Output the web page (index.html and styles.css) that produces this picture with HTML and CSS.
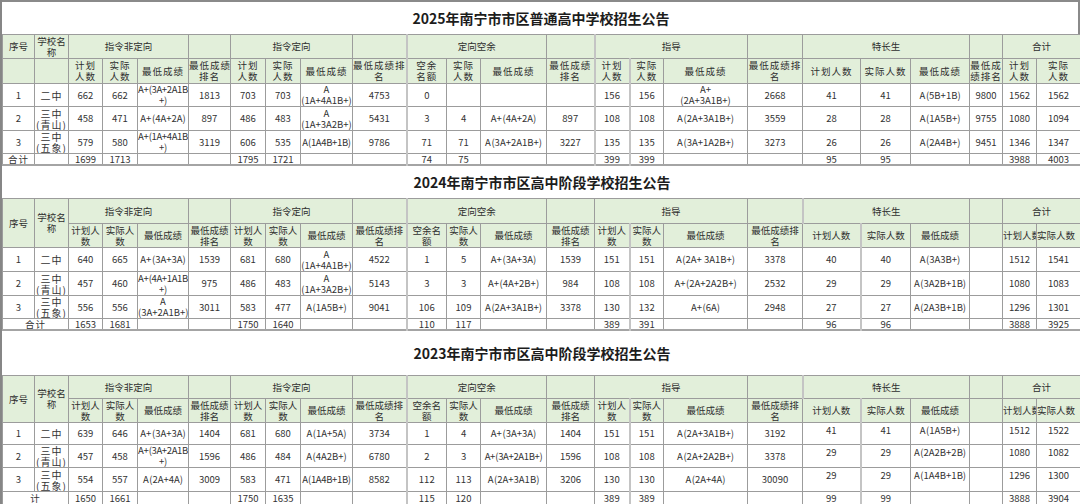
FILE: index.html
```html
<!DOCTYPE html>
<html lang="zh-CN">
<head>
<meta charset="utf-8">
<title>南宁市市区高中学校招生公告</title>
<link rel="stylesheet" href="styles.css">
</head>
<body>
<div class="page">

<section class="block b2025">
  <div class="block-title">2025年南宁市市区普通高中学校招生公告</div>
  <table class="grid">
    <colgroup><col><col><col><col><col><col><col><col><col><col><col><col><col><col><col><col><col><col><col><col><col><col><col><col></colgroup>
    <tr class="hd h1">
      <td>序号</td><td>学校名<br>称</td><td colspan="3">指令非定向</td><td></td><td colspan="3">指令定向</td><td></td><td colspan="3" class="thick-l">定向空余</td><td></td><td colspan="3" class="thick-l">指导</td><td></td><td colspan="3">特长生</td><td></td><td colspan="2">合计</td>
    </tr>
    <tr class="hd h2 sp">
      <td></td><td></td><td>计划<br>人数</td><td>实际<br>人数</td><td>最低成绩</td><td>最低成绩<br>排名</td><td>计划<br>人数</td><td>实际<br>人数</td><td>最低成绩</td><td>最低成绩排<br>名</td><td class="thick-l">空余<br>名额</td><td>实际<br>人数</td><td>最低成绩</td><td>最低成绩<br>排名</td><td class="thick-l">计划<br>人数</td><td class="thick-l">实际<br>人数</td><td>最低成绩</td><td>最低成绩排<br>名</td><td>计划人数</td><td>实际人数</td><td>最低成绩</td><td>最低成<br>绩排名</td><td>计划<br>人数</td><td>实际<br>人数</td>
    </tr>
    <tr class="d r1">
      <td>1</td><td class="cn">二中</td><td>662</td><td>662</td><td class="tight">A+&#8202;(3A+2A1B<br>+)</td><td>1813</td><td>703</td><td>703</td><td>A<br>(1A+4A1B+)</td><td>4753</td><td class="thick-l">0</td><td></td><td></td><td></td><td class="thick-l">156</td><td class="thick-l">156</td><td>A+<br>(2A+3A1B+)</td><td>2668</td><td>41</td><td>41</td><td>A&#8202;(5B+1B)</td><td>9800</td><td>1562</td><td>1562</td>
    </tr>
    <tr class="d r2">
      <td>2</td><td class="cn">三中<br>(青山)</td><td>458</td><td>471</td><td>A+&#8202;(4A+2A)</td><td>897</td><td>486</td><td>483</td><td>A<br>(1A+3A2B+)</td><td>5431</td><td class="thick-l">3</td><td>4</td><td>A+&#8202;(4A+2A)</td><td>897</td><td class="thick-l">108</td><td class="thick-l">108</td><td>A&#8202;(2A+3A1B+)</td><td>3559</td><td>28</td><td>28</td><td>A&#8202;(1A5B+)</td><td>9755</td><td>1080</td><td>1094</td>
    </tr>
    <tr class="d r3">
      <td>3</td><td class="cn">三中<br>(五象)</td><td>579</td><td>580</td><td class="tight">A+&#8202;(1A+4A1B<br>+)</td><td>3119</td><td>606</td><td>535</td><td class="tight">A&#8202;(1A4B+1B)</td><td>9786</td><td class="thick-l">71</td><td>71</td><td>A&#8202;(3A+2A1B+)</td><td>3227</td><td class="thick-l">135</td><td class="thick-l">135</td><td>A&#8202;(3A+1A2B+)</td><td>3273</td><td>26</td><td>26</td><td>A&#8202;(2A4B+)</td><td>9451</td><td>1346</td><td>1347</td>
    </tr>
    <tr class="t">
      <td class="cn">合计</td><td></td><td>1699</td><td>1713</td><td></td><td></td><td>1795</td><td>1721</td><td></td><td></td><td class="thick-l">74</td><td>75</td><td></td><td></td><td class="thick-l">399</td><td class="thick-l">399</td><td></td><td></td><td>95</td><td>95</td><td></td><td></td><td>3988</td><td>4003</td>
    </tr>
  </table>
</section>

<section class="block b2024">
  <div class="block-title">2024年南宁市市区高中阶段学校招生公告</div>
  <table class="grid">
    <colgroup><col><col><col><col><col><col><col><col><col><col><col><col><col><col><col><col><col><col><col><col><col><col><col><col></colgroup>
    <tr class="hd h1">
      <td rowspan="2">序号</td><td rowspan="2">学校名<br>称</td><td colspan="3">指令非定向</td><td></td><td colspan="3">指令定向</td><td></td><td colspan="3" class="thick-l">定向空余</td><td></td><td colspan="3">指导</td><td></td><td colspan="3" class="thick-l">特长生</td><td></td><td colspan="2">合计</td>
    </tr>
    <tr class="hd h2">
      <td>计划人<br>数</td><td>实际人<br>数</td><td>最低成绩</td><td>最低成绩<br>排名</td><td>计划人<br>数</td><td>实际人<br>数</td><td>最低成绩</td><td>最低成绩排<br>名</td><td class="thick-l">空余名<br>额</td><td>实际人<br>数</td><td>最低成绩</td><td>最低成绩<br>排名</td><td>计划人<br>数</td><td class="thick-l">实际人<br>数</td><td>最低成绩</td><td>最低成绩排<br>名</td><td>计划人数</td><td class="thick-l">实际人数</td><td>最低成绩</td><td></td><td class="spill">计划人数</td><td class="spill">实际人数</td>
    </tr>
    <tr class="d r1">
      <td>1</td><td class="cn">二中</td><td>640</td><td>665</td><td>A+&#8202;(3A+3A)</td><td>1539</td><td>681</td><td>680</td><td>A<br>(1A+4A1B+)</td><td>4522</td><td class="thick-l">1</td><td>5</td><td>A+&#8202;(3A+3A)</td><td>1539</td><td>151</td><td class="thick-l">151</td><td>A&#8202;(2A+ 3A1B+)</td><td>3378</td><td>40</td><td class="thick-l">40</td><td>A&#8202;(3A3B+)</td><td></td><td>1512</td><td>1541</td>
    </tr>
    <tr class="d r2">
      <td>2</td><td class="cn">三中<br>(青山)</td><td>457</td><td>460</td><td class="tight">A+&#8202;(4A+1A1B<br>+)</td><td>975</td><td>486</td><td>483</td><td>A<br>(1A+3A2B+)</td><td>5143</td><td class="thick-l">3</td><td>3</td><td>A+&#8202;(4A+2B+)</td><td>984</td><td>108</td><td class="thick-l">108</td><td>A+&#8202;(2A+2A2B+)</td><td>2532</td><td>29</td><td class="thick-l">29</td><td>A&#8202;(3A2B+1B)</td><td></td><td>1080</td><td>1083</td>
    </tr>
    <tr class="d r3">
      <td>3</td><td class="cn">三中<br>(五象)</td><td>556</td><td>556</td><td>A<br>(3A+2A1B+)</td><td>3011</td><td>583</td><td>477</td><td>A&#8202;(1A5B+)</td><td>9041</td><td class="thick-l">106</td><td>109</td><td>A&#8202;(2A+3A1B+)</td><td>3378</td><td>130</td><td class="thick-l">132</td><td>A+&#8202;(6A)</td><td>2948</td><td>27</td><td class="thick-l">27</td><td>A&#8202;(2A3B+1B)</td><td></td><td>1296</td><td>1301</td>
    </tr>
    <tr class="t">
      <td colspan="2" class="cn">合计</td><td>1653</td><td>1681</td><td></td><td></td><td>1750</td><td>1640</td><td></td><td></td><td class="thick-l">110</td><td>117</td><td></td><td></td><td>389</td><td class="thick-l">391</td><td></td><td></td><td>96</td><td class="thick-l">96</td><td></td><td></td><td>3888</td><td>3925</td>
    </tr>
  </table>
</section>

<section class="block b2023">
  <div class="block-title">2023年南宁市市区高中阶段学校招生公告</div>
  <table class="grid">
    <colgroup><col><col><col><col><col><col><col><col><col><col><col><col><col><col><col><col><col><col><col><col><col><col><col><col></colgroup>
    <tr class="hd h1">
      <td rowspan="2">序号</td><td rowspan="2">学校名<br>称</td><td colspan="3">指令非定向</td><td></td><td colspan="3">指令定向</td><td></td><td colspan="3" class="thick-l">定向空余</td><td></td><td colspan="3">指导</td><td></td><td colspan="3" class="thick-l">特长生</td><td></td><td colspan="2">合计</td>
    </tr>
    <tr class="hd h2">
      <td>计划人<br>数</td><td>实际人<br>数</td><td>最低成绩</td><td>最低成绩<br>排名</td><td>计划人<br>数</td><td>实际人<br>数</td><td>最低成绩</td><td>最低成绩排<br>名</td><td class="thick-l">空余名<br>额</td><td>实际人<br>数</td><td>最低成绩</td><td>最低成绩<br>排名</td><td>计划人<br>数</td><td class="thick-l">实际人<br>数</td><td>最低成绩</td><td>最低成绩排<br>名</td><td>计划人数</td><td class="thick-l">实际人数</td><td>最低成绩</td><td></td><td class="spill">计划人数</td><td class="spill">实际人数</td>
    </tr>
    <tr class="d r1">
      <td>1</td><td class="cn">二中</td><td>639</td><td>646</td><td>A+&#8202;(3A+3A)</td><td>1404</td><td>681</td><td>680</td><td>A&#8202;(1A+5A)</td><td>3734</td><td class="thick-l">1</td><td>4</td><td>A+&#8202;(3A+3A)</td><td>1404</td><td>151</td><td class="thick-l">151</td><td>A&#8202;(2A+3A1B+)</td><td>3192</td><td class="top">41</td><td class="top thick-l">41</td><td class="top">A&#8202;(1A5B+)</td><td></td><td class="top">1512</td><td class="top">1522</td>
    </tr>
    <tr class="d r2">
      <td>2</td><td class="cn">三中<br>(青山)</td><td>457</td><td>458</td><td class="tight">A+&#8202;(3A+2A1B<br>+)</td><td>1596</td><td>486</td><td>484</td><td>A&#8202;(4A2B+)</td><td>6780</td><td class="thick-l">2</td><td>3</td><td class="tight">A+&#8202;(3A+2A1B+)</td><td>1596</td><td>108</td><td class="thick-l">108</td><td>A&#8202;(2A+2A2B+)</td><td>3378</td><td class="top">29</td><td class="top thick-l">29</td><td class="top">A&#8202;(2A2B+2B)</td><td></td><td class="top">1080</td><td class="top">1082</td>
    </tr>
    <tr class="d r3">
      <td>3</td><td class="cn">三中<br>(五象)</td><td>554</td><td>557</td><td>A&#8202;(2A+4A)</td><td>3009</td><td>583</td><td>471</td><td class="tight">A&#8202;(1A4B+1B)</td><td>8582</td><td class="thick-l">112</td><td>113</td><td>A&#8202;(2A+3A1B)</td><td>3206</td><td>130</td><td class="thick-l">130</td><td>A&#8202;(2A+4A)</td><td>30090</td><td class="top">29</td><td class="top thick-l">29</td><td class="top">A&#8202;(1A4B+1B)</td><td></td><td class="top">1296</td><td class="top">1300</td>
    </tr>
    <tr class="t">
      <td colspan="2" class="cn">计</td><td>1650</td><td>1661</td><td></td><td></td><td>1750</td><td>1635</td><td></td><td></td><td class="thick-l">115</td><td>120</td><td></td><td></td><td>389</td><td class="thick-l">389</td><td></td><td></td><td>99</td><td class="thick-l">99</td><td></td><td></td><td>3888</td><td>3904</td>
    </tr>
  </table>
</section>

</div>
</body>
</html>
```

FILE: styles.css
```css
* { box-sizing: border-box; }

html, body {
  margin: 0;
  padding: 0;
  background: #ffffff;
}

body {
  font-family: "Noto Sans CJK SC", sans-serif;
  color: #333333;
}

.page {
  width: 1080px;
  height: 504px;
  overflow: hidden;
  border-left: 2px solid #868686;
}

.block-title {
  display: flex;
  align-items: center;
  justify-content: center;
  font-size: 14px;
  line-height: 16px;
  font-weight: 700;
  color: #1c1c1c;
  padding-left: 2px;
}

.b2025 .block-title {
  height: 34px;
  border-top: 2px solid #8a8a8a;
  border-right: 2px solid #8a8a8a;
}

.b2024 .block-title { height: 32px; }
.b2023 .block-title { height: 44px; }

.grid {
  width: 1078px;
  border-collapse: collapse;
  table-layout: fixed;
  border-bottom: 2px solid #a4a4a4;
}

.grid col:nth-child(1)  { width: 32px; }
.grid col:nth-child(2)  { width: 34px; }
.grid col:nth-child(3)  { width: 34px; }
.grid col:nth-child(4)  { width: 35px; }
.grid col:nth-child(5)  { width: 51px; }
.grid col:nth-child(6)  { width: 42px; }
.grid col:nth-child(7)  { width: 35px; }
.grid col:nth-child(8)  { width: 35px; }
.grid col:nth-child(9)  { width: 52px; }
.grid col:nth-child(10) { width: 54px; }
.grid col:nth-child(11) { width: 40px; }
.grid col:nth-child(12) { width: 34px; }
.grid col:nth-child(13) { width: 66px; }
.grid col:nth-child(14) { width: 48px; }
.grid col:nth-child(15) { width: 35px; }
.grid col:nth-child(16) { width: 34px; }
.grid col:nth-child(17) { width: 84px; }
.grid col:nth-child(18) { width: 55px; }
.grid col:nth-child(19) { width: 58px; }
.grid col:nth-child(20) { width: 50px; }
.grid col:nth-child(21) { width: 59px; }
.grid col:nth-child(22) { width: 33px; }
.grid col:nth-child(23) { width: 34px; }
.grid col:nth-child(24) { width: 44px; }

.grid td {
  border: 1px solid #9c9c9c;
  padding: 0;
  text-align: center;
  vertical-align: middle;
  font-family: "Noto Sans CJK SC", sans-serif;
  font-size: 9.5px;
  line-height: 11px;
  white-space: nowrap;
  overflow: hidden;
  color: #333333;
}

.grid td.thick-l { border-left: 2px solid #c4c4c4; }

.grid td.tight { letter-spacing: -0.35px; }

.grid .hd td {
  background: #e2efda;
  font-size: 9.5px;
  line-height: 11px;
  color: #2e2e2e;
}

.grid .sp td { letter-spacing: 1px; }

.grid td.cn {
  font-size: 10px;
  line-height: 11px;
  letter-spacing: 1px;
}

.grid .t td {
  line-height: 10px;
}

.grid .t td.cn {
  font-size: 9.5px;
  line-height: 10px;
}

.grid td.spill {
  text-align: left;
  overflow: hidden;
}

.grid td.top {
  vertical-align: top;
  padding-top: 2px;
}

/* 2025 row heights */
.b2025 .h1 td { height: 24px; }
.b2025 .h2 td { height: 25px; }
.b2025 .r1 td { height: 23px; }
.b2025 .r2 td { height: 24px; }
.b2025 .r3 td { height: 23px; }
.b2025 .t td  { height: 11px; }

/* 2024 row heights */
.b2024 .h1 td { height: 25px; }
.b2024 .h2 td { height: 24px; }
.b2024 .r1 td { height: 24px; }
.b2024 .r2 td { height: 24px; }
.b2024 .r3 td { height: 23px; }
.b2024 .t td  { height: 11px; }

/* 2023 row heights */
.b2023 .h1 td { height: 23px; }
.b2023 .h2 td { height: 24px; }
.b2023 .r1 td { height: 22px; }
.b2023 .r2 td { height: 22px; }
.b2023 .r3 td { height: 24px; }
.b2023 .t td  { height: 13px; }
```
